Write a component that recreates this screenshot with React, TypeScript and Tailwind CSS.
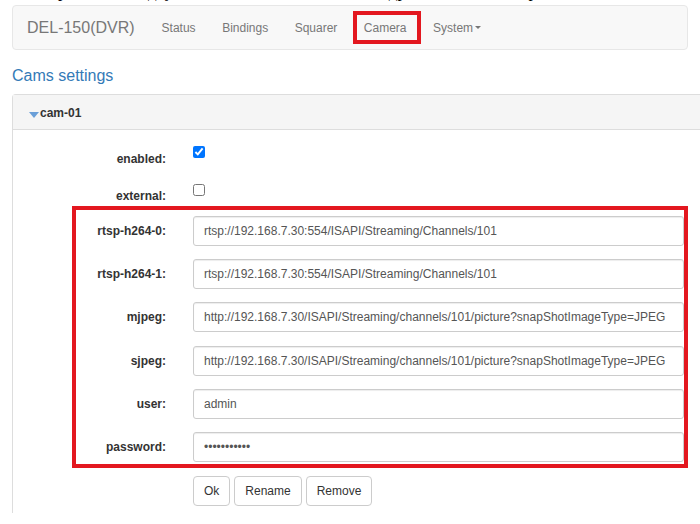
import React from "react";

const rows: [string, string, string?][] = [
  ["rtsp-h264-0:", "rtsp://192.168.7.30:554/ISAPI/Streaming/Channels/101"],
  ["rtsp-h264-1:", "rtsp://192.168.7.30:554/ISAPI/Streaming/Channels/101"],
  ["mjpeg:", "http://192.168.7.30/ISAPI/Streaming/channels/101/picture?snapShotImageType=JPEG"],
  ["sjpeg:", "http://192.168.7.30/ISAPI/Streaming/channels/101/picture?snapShotImageType=JPEG"],
  ["user:", "admin"],
  ["password:", "admin123456", "password"],
];

export default function App() {
  return (
    <div className="w-[700px] h-[524px] overflow-hidden bg-white font-['Liberation_Sans',Arial,sans-serif] text-[12px] text-[#333]">
      <div className="h-[5px] overflow-hidden">
        <div className="mt-[-18.5px] ml-[30px] whitespace-nowrap font-['Liberation_Serif',serif] text-[17px] leading-[20px] text-black">
          Открываем вкладку Camera и вписываем в поля адреса потоков камеры, как показано ниже:
        </div>
      </div>

      <nav className="mx-[12px] h-[45px] flex items-center rounded-[4px] border border-[#e7e7e7] bg-[#f8f8f8] text-[#777]">
        <span className="ml-[14px] text-[16px] leading-[20px]">DEL-150(DVR)</span>
        <div className="ml-[27px] flex items-center gap-[26.5px] text-[12px] leading-[14px]">
          <span>Status</span>
          <span>Bindings</span>
          <span>Squarer</span>
          <span className="relative">
            Camera
            <span className="absolute left-[-11px] right-[-14px] top-[-10px] bottom-[-9px] border-[4px] border-[#e3171f]" />
          </span>
          <span className="flex items-center">
            System
            <span className="ml-[2px] inline-block h-0 w-0 border-x-[3px] border-t-[3px] border-x-transparent border-t-[#777]" />
          </span>
        </div>
      </nav>

      <div className="ml-[12px] mt-[15px] text-[16px] leading-[22px] text-[#337ab7]">Cams settings</div>

      <div className="ml-[12px] mt-[7px] w-[720px] rounded-t-[4px] border border-b-0 border-[#ddd]">
        <div className="h-[35px] flex items-center border-b border-[#ddd] bg-[#f5f5f5] pl-[16px] pt-[2px]">
          <svg width="10" height="6" viewBox="0 0 10 6" className="mt-[3px]">
            <polygon points="0,0 10,0 5,6" fill="#6a9fd8" />
          </svg>
          <span className="ml-[1px] font-bold text-[12px] text-[#333]">cam-01</span>
        </div>

        <div className="pt-[14px] pb-[7px]">
          <div className="h-[37px] flex">
            <span className="w-[153px] text-right font-bold leading-[14px] mt-[8px]">enabled:</span>
            <input type="checkbox" defaultChecked className="ml-[27px] mt-[2px] m-0 w-[12px] h-[12px]" />
          </div>
          <div className="h-[25px] flex">
            <span className="w-[153px] text-right font-bold leading-[14px] mt-[8px]">external:</span>
            <input type="checkbox" className="ml-[27px] mt-[3px] m-0 w-[12px] h-[12px]" />
          </div>

          <div className="ml-[59px] w-[616px] border-[4px] border-[#e3171f] pt-[6px] pb-[2px] flex flex-col gap-[13.2px]">
            {rows.map(([label, value, type]) => (
              <div key={label} className="flex items-center">
                <span className="w-[90px] text-right font-bold leading-[14px]">{label}</span>
                <input
                  readOnly
                  type={type ?? "text"}
                  value={value}
                  className="ml-[27px] h-[30px] flex-1 min-w-0 rounded-[3px] border border-[#ccc] bg-white px-[10px] text-[12px] text-[#555] outline-none shadow-[inset_0_1px_1px_rgba(0,0,0,0.075)]"
                />
              </div>
            ))}
          </div>

          <div className="ml-[180px] mt-[8px] flex gap-[4px]">
            {["Ok", "Rename", "Remove"].map((b) => (
              <button
                key={b}
                className="h-[30px] rounded-[4px] border border-[#ccc] bg-white px-[10px] text-[12px] text-[#333]"
              >
                {b}
              </button>
            ))}
          </div>
        </div>
      </div>
    </div>
  );
}
